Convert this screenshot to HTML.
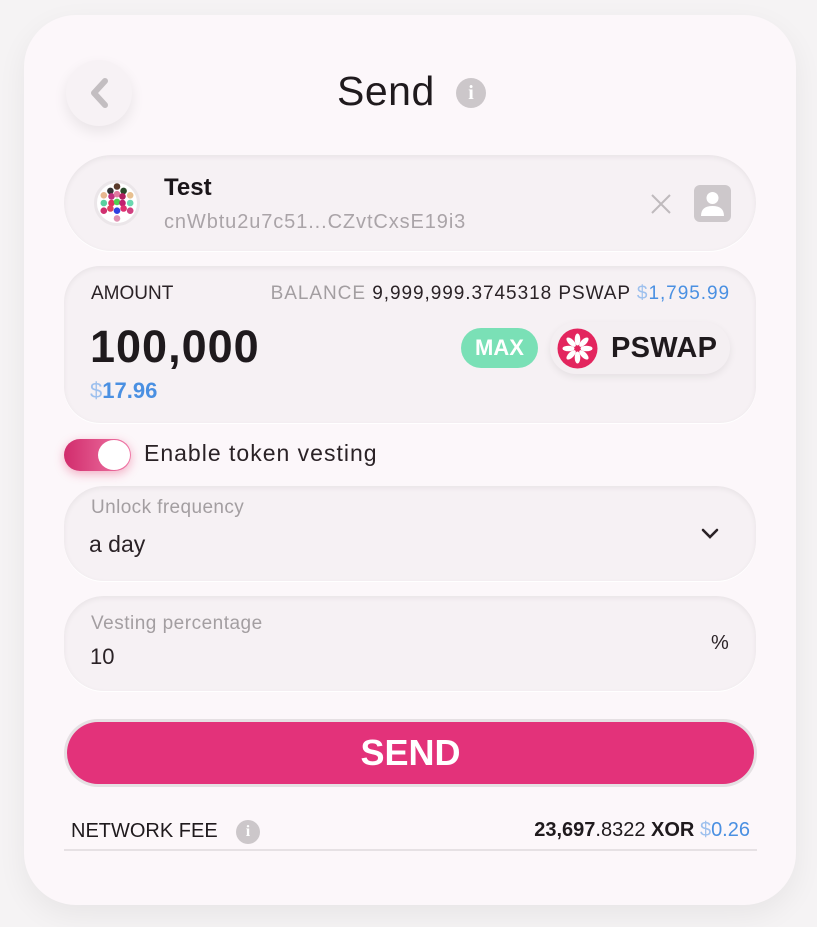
<!DOCTYPE html>
<html><head><meta charset="utf-8"><style>
*{box-sizing:border-box;margin:0;padding:0}
body{width:817px;height:927px;background:#f5f3f4;font-family:"Liberation Sans",sans-serif;color:#2a2226;position:relative;overflow:hidden}
.card{position:absolute;left:24px;top:15px;width:772px;height:890px;background:#fcf7fa;border-radius:52px;box-shadow:0 10px 30px rgba(0,0,0,0.06)}
.abs{position:absolute}
.box{position:absolute;left:64px;width:692px;background:#f6f1f4;box-shadow:inset 0 2px 6px rgba(0,0,0,0.06),0 1px 0 #fff;}
.grey{color:#a39ea1}
</style></head><body>
<div class="card"></div>
<div class="abs" style="left:66px;top:60px;width:66px;height:66px;border-radius:50%;background:#f7f2f5;box-shadow:0 6px 14px rgba(0,0,0,0.08)"></div>
<svg class="abs" style="left:85px;top:75px" width="28" height="36"><path d="M20 6 L9 18 L20 30" stroke="#c3bec1" stroke-width="6" fill="none" stroke-linecap="round" stroke-linejoin="round"/></svg>
<div class="abs" style="left:337px;top:68px;font-size:41px;color:#1f1a1d;letter-spacing:0.5px">Send</div>
<div class="abs" style="left:456px;top:78px;width:30px;height:30px;border-radius:50%;background:#ccc7ca;color:#fff;font-weight:bold;font-size:20px;text-align:center;line-height:30px;font-family:'Liberation Serif',serif">i</div>

<div class="box" style="top:155px;height:96px;border-radius:48px"></div>
<div class="abs" style="left:94px;top:180px;width:46px;height:46px;border-radius:50%;background:#fff;border:3px solid #ebe6e9"></div>
<svg class="abs" style="left:97px;top:182px" width="40" height="42">
<g transform="translate(20 21) scale(1.1) translate(-20 -20)">
<circle cx="20" cy="5" r="3" fill="#5a3a2a"/><circle cx="14" cy="9" r="3" fill="#333"/><circle cx="26" cy="9" r="3" fill="#2a4a2a"/>
<circle cx="8" cy="13" r="3" fill="#e8b890"/><circle cx="15" cy="14" r="3" fill="#c03080"/><circle cx="20" cy="12" r="3" fill="#e07aa0"/><circle cx="25" cy="14" r="3" fill="#b02060"/><circle cx="32" cy="13" r="3" fill="#e8c090"/>
<circle cx="8" cy="20" r="3" fill="#5ad0a0"/><circle cx="15" cy="20" r="3" fill="#e03060"/><circle cx="20" cy="19" r="3" fill="#50d050"/><circle cx="25" cy="20" r="3" fill="#c02070"/><circle cx="32" cy="20" r="3" fill="#6ad8b0"/>
<circle cx="8" cy="27" r="3" fill="#d03070"/><circle cx="14" cy="25" r="3" fill="#e04060"/><circle cx="20" cy="27" r="3" fill="#3040e0"/><circle cx="26" cy="25" r="3" fill="#e03070"/><circle cx="32" cy="27" r="3" fill="#d04080"/>
<circle cx="20" cy="34" r="3" fill="#e090b0"/></g></svg>
<div class="abs" style="left:164px;top:174px;font-size:24px;font-weight:bold;color:#1a1519">Test</div>
<div class="abs" style="left:164px;top:211px;font-size:20px;color:#aaa4a8;letter-spacing:0.9px">cnWbtu2u7c51...CZvtCxsE19i3</div>
<svg class="abs" style="left:650px;top:193px" width="22" height="22"><path d="M2 2 L20 20 M20 2 L2 20" stroke="#bfbabd" stroke-width="2"/></svg>
<div class="abs" style="left:694px;top:185px;width:37px;height:37px;border-radius:6px;background:#cdc8cb"></div>
<svg class="abs" style="left:694px;top:185px" width="37" height="37"><circle cx="18.5" cy="13" r="6" fill="#fff"/><path d="M7 31 Q7 21 18.5 21 Q30 21 30 31 Z" fill="#fff"/></svg>

<div class="box" style="top:266px;height:157px;border-radius:36px"></div>
<div class="abs" style="left:91px;top:283px;font-size:19px;color:#2a2226">AMOUNT</div>
<div class="abs" style="right:87px;top:283px;font-size:19px;white-space:nowrap;letter-spacing:0.95px"><span class="grey">BALANCE</span> 9,999,999.3745318 PSWAP <span style="color:#4a90e2"><span style="color:#9dc0ee">$</span>1,795.99</span></div>
<div class="abs" style="left:90px;top:321px;font-size:45px;font-weight:bold;color:#1f1a1d;letter-spacing:1px">100,000</div>
<div class="abs" style="left:90px;top:378px;font-size:22px;font-weight:bold;color:#4a90e2"><span style="color:#9dc0ee;font-weight:normal">$</span>17.96</div>
<div class="abs" style="left:461px;top:328px;width:77px;height:40px;border-radius:20px;background:#7ae0b6;color:#fff;font-weight:bold;font-size:22px;text-align:center;line-height:40px">MAX</div>
<div class="abs" style="left:550px;top:322px;width:180px;height:52px;border-radius:26px;background:#f4eff2;box-shadow:0 3px 8px rgba(0,0,0,0.07)"></div>
<svg class="abs" style="left:557px;top:328px" width="41" height="41"><circle cx="20.5" cy="20.5" r="20" fill="#e3255e"/>
<g fill="#fff" transform="translate(20.5 20.5)">
<ellipse cx="0" cy="-9" rx="2.8" ry="6"/><ellipse cx="0" cy="-9" rx="2.8" ry="6" transform="rotate(45)"/><ellipse cx="0" cy="-9" rx="2.8" ry="6" transform="rotate(90)"/><ellipse cx="0" cy="-9" rx="2.8" ry="6" transform="rotate(135)"/><ellipse cx="0" cy="-9" rx="2.8" ry="6" transform="rotate(180)"/><ellipse cx="0" cy="-9" rx="2.8" ry="6" transform="rotate(225)"/><ellipse cx="0" cy="-9" rx="2.8" ry="6" transform="rotate(270)"/><ellipse cx="0" cy="-9" rx="2.8" ry="6" transform="rotate(315)"/></g></svg>
<div class="abs" style="left:611px;top:332px;font-size:29px;font-weight:bold;color:#1f1a1d;letter-spacing:0.3px">PSWAP</div>

<div class="abs" style="left:64px;top:439px;width:67px;height:32px;border-radius:16px;background:linear-gradient(90deg,#d12c6c,#f07aa8);box-shadow:0 3px 10px rgba(227,37,94,0.35)"></div>
<div class="abs" style="left:98px;top:440px;width:32px;height:30px;border-radius:50%;background:#fff"></div>
<div class="abs" style="left:144px;top:440px;font-size:23px;color:#2a2226;letter-spacing:1px">Enable token vesting</div>

<div class="box" style="top:486px;height:95px;border-radius:40px"></div>
<div class="abs grey" style="left:91px;top:497px;font-size:19px;letter-spacing:0.4px">Unlock frequency</div>
<div class="abs" style="left:89px;top:531px;font-size:23px">a day</div>
<svg class="abs" style="left:700px;top:527px" width="20" height="14"><path d="M3 3 L10 10 L17 3" stroke="#2a2226" stroke-width="2.6" fill="none" stroke-linecap="round"/></svg>

<div class="box" style="top:596px;height:95px;border-radius:40px"></div>
<div class="abs grey" style="left:91px;top:613px;font-size:19px;letter-spacing:0.5px">Vesting percentage</div>
<div class="abs" style="left:90px;top:644px;font-size:22px">10</div>
<div class="abs" style="left:711px;top:632px;font-size:20px">%</div>

<div class="abs" style="left:64px;top:719px;width:693px;height:68px;border-radius:34px;background:#e5e0e3"></div>
<div class="abs" style="left:67px;top:722px;width:687px;height:62px;border-radius:31px;background:#e3327a;color:#fff;font-weight:bold;font-size:36px;text-align:center;line-height:62px">SEND</div>

<div class="abs" style="left:71px;top:820px;font-size:20px;color:#1f1a1d">NETWORK FEE</div>
<div class="abs" style="left:236px;top:820px;width:24px;height:24px;border-radius:50%;background:#ccc7ca;color:#fff;font-weight:bold;font-size:16px;text-align:center;line-height:24px;font-family:'Liberation Serif',serif">i</div>
<div class="abs" style="right:67px;top:819px;font-size:20px;white-space:nowrap;color:#1f1a1d"><b>23,697</b>.8322 <b>XOR</b> <span style="color:#9dc0ee">$</span><span style="color:#4a90e2">0.26</span></div>
<div class="abs" style="left:64px;top:849px;width:693px;height:2px;background:#e6e1e4"></div>
</body></html>
